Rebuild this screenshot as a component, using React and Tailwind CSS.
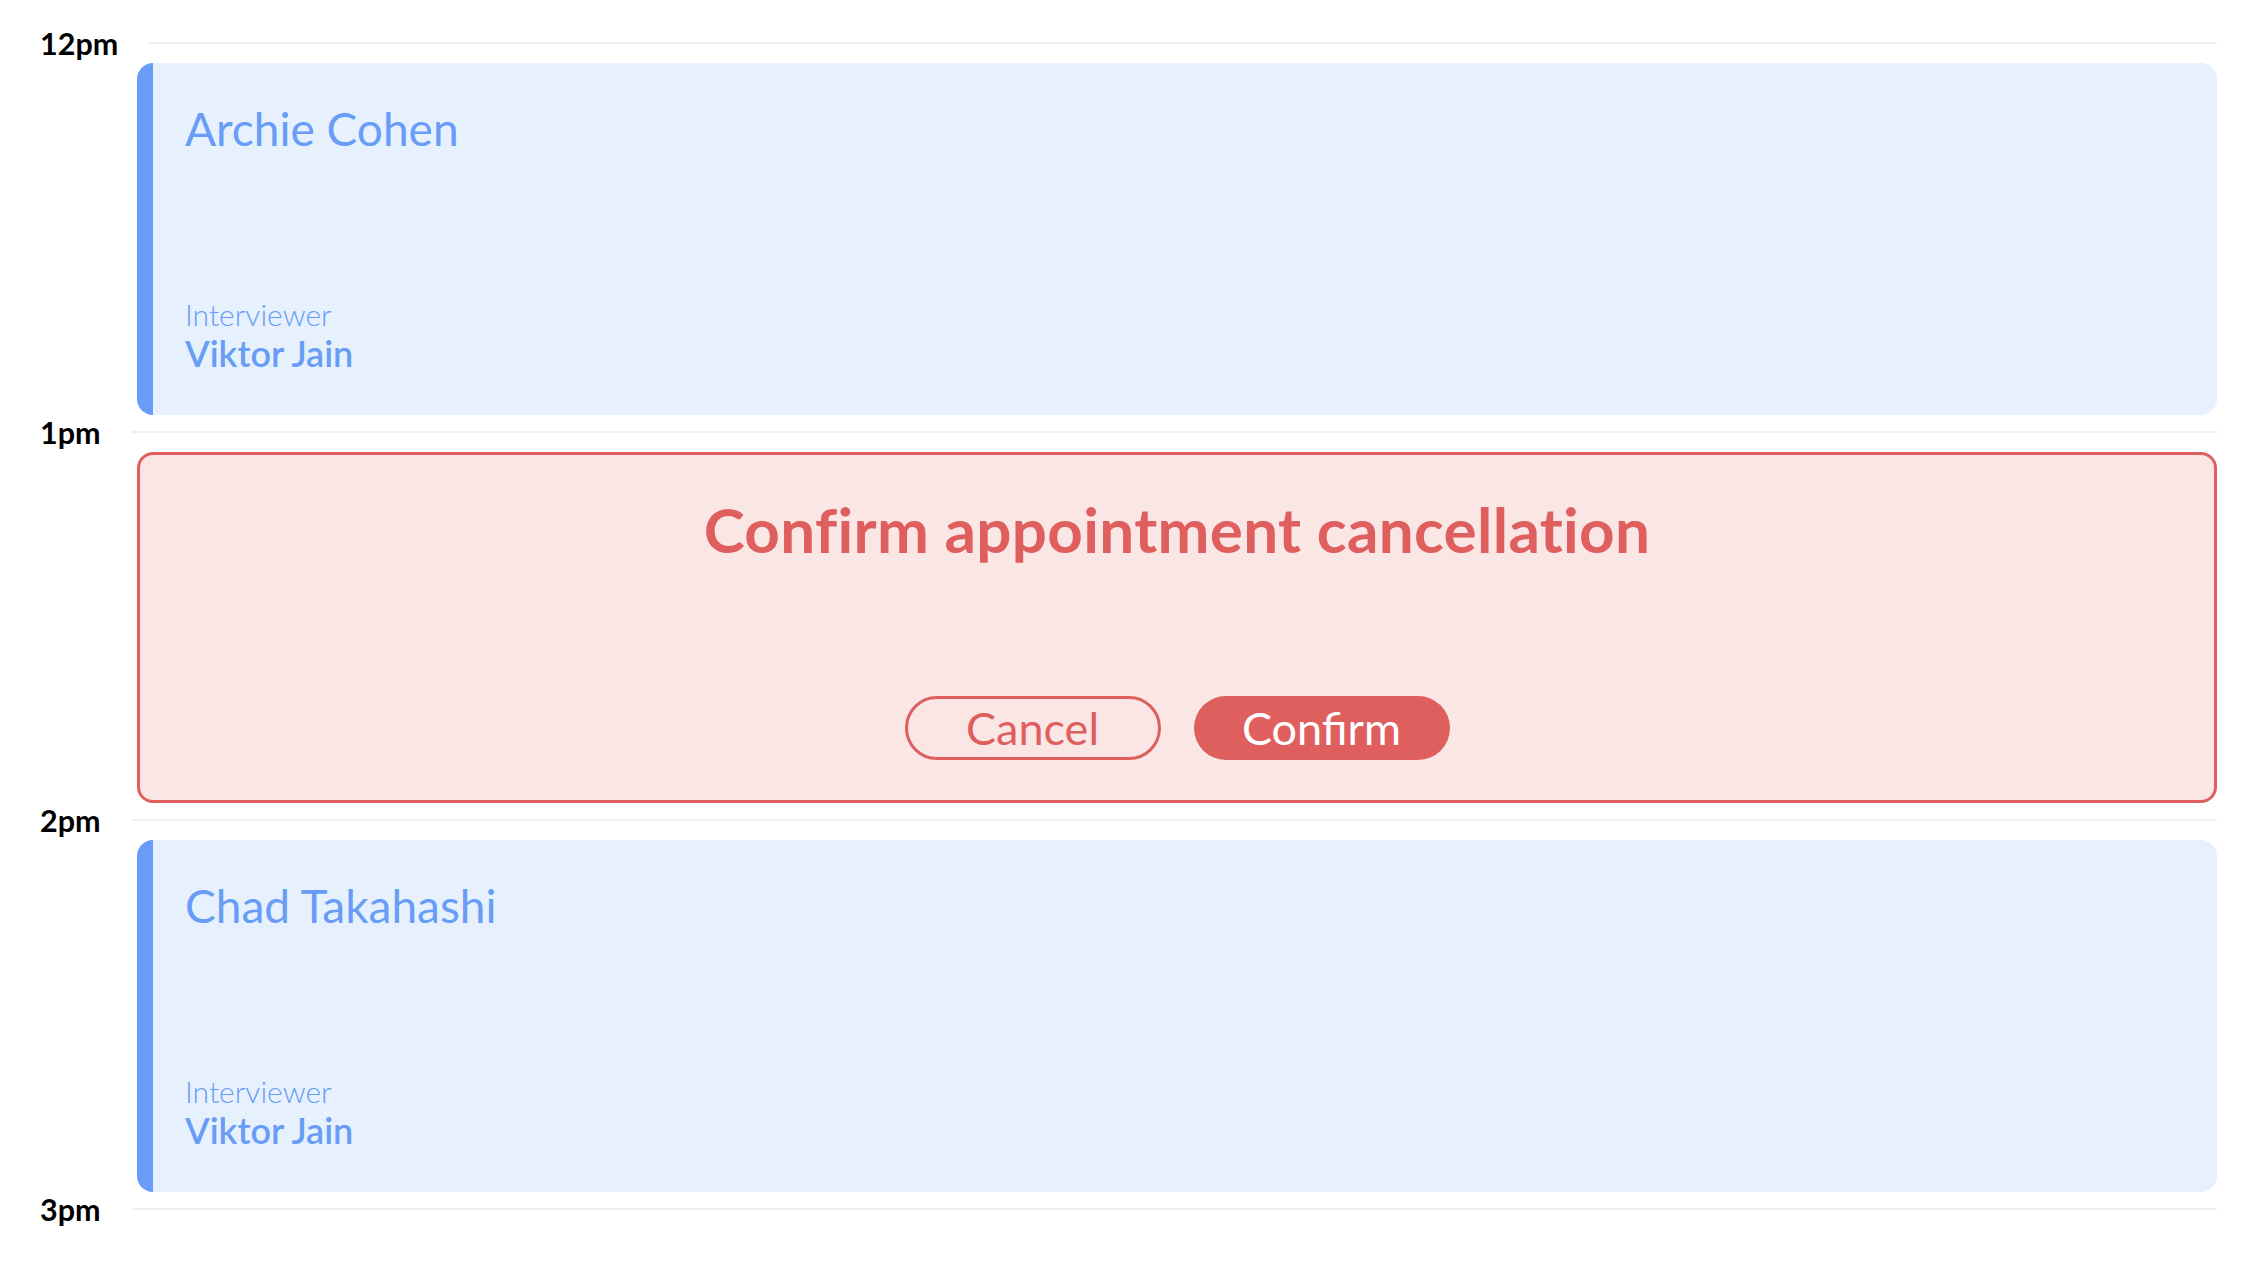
import React from "react";

function HourRow({ label }) {
  return (
    <div className="flex h-[34px] items-center">
      <span className="text-[30.5px] font-bold leading-none text-black">{label}</span>
      <div className="ml-[31px] h-[2px] flex-1 bg-[#f0f0f0]" />
    </div>
  );
}

function Appointment({ name, interviewer }) {
  return (
    <div className="ml-[97px] mt-[3px] flex h-[352px] flex-col justify-between rounded-2xl border-l-[16px] border-[#679df6] bg-[#e7f0fd] pb-[40px] pl-[32px] pt-[38px] text-[#679df6]">
      <div className="text-[46px] leading-[1.2]">{name}</div>
      <div className="flex flex-col">
        <span className="text-[30px] font-light leading-[1.2]">Interviewer</span>
        <span className="text-[36px] font-semibold leading-[1.2]">{interviewer}</span>
      </div>
    </div>
  );
}

function CancelConfirm() {
  return (
    <div className="ml-[97px] mt-[3px] flex h-[351px] flex-col items-center justify-between rounded-2xl border-[3px] border-[#df5f5f] bg-[#fbe6e6] pb-[40px] pt-[37px]">
      <div className="text-[62px] font-bold leading-[1.2] tracking-[0.3px] text-[#df5f5f]">
        Confirm appointment cancellation
      </div>
      <div className="flex gap-[33px]">
        <button className="flex h-[64px] w-[256px] items-center justify-center rounded-full border-[3px] border-[#df5f5f] text-[45px] leading-none text-[#df5f5f]">
          Cancel
        </button>
        <button className="flex h-[64px] w-[256px] items-center justify-center rounded-full bg-[#df5f5f] text-[45px] leading-none text-white">
          Confirm
        </button>
      </div>
    </div>
  );
}

export default function App() {
  return (
    <div className="min-h-screen bg-white pl-[40px] pr-[36px] pt-[26px] font-['Lato',sans-serif]">
      <HourRow label="12pm" />
      <Appointment name="Archie Cohen" interviewer="Viktor Jain" />
      <HourRow label="1pm" />
      <CancelConfirm />
      <HourRow label="2pm" />
      <Appointment name="Chad Takahashi" interviewer="Viktor Jain" />
      <HourRow label="3pm" />
    </div>
  );
}
